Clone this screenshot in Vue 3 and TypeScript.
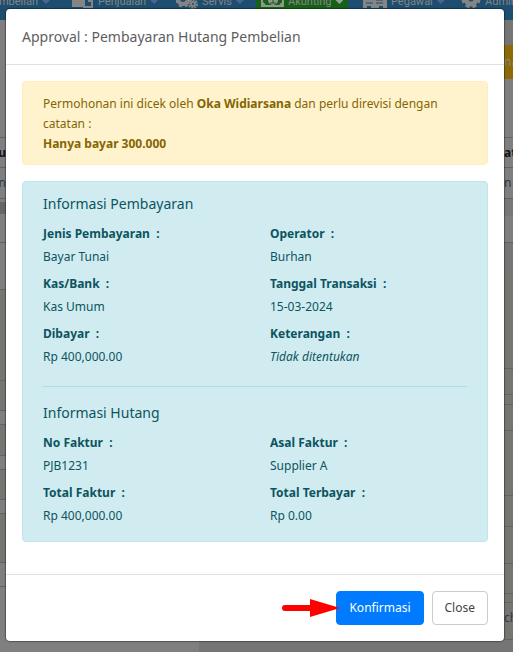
<script setup lang="ts">
interface Field {
  label: string
  value: string
  empty?: boolean
}
interface Section {
  title: string
  fields: Field[]
}
interface Strip {
  height: number
  tone: string
  text?: string
  bold?: boolean
}

const sections: Section[] = [
  {
    title: 'Informasi Pembayaran',
    fields: [
      { label: 'Jenis Pembayaran', value: 'Bayar Tunai' },
      { label: 'Operator', value: 'Burhan' },
      { label: 'Kas/Bank', value: 'Kas Umum' },
      { label: 'Tanggal Transaksi', value: '15-03-2024' },
      { label: 'Dibayar', value: 'Rp 400,000.00' },
      { label: 'Keterangan', value: 'Tidak ditentukan', empty: true },
    ],
  },
  {
    title: 'Informasi Hutang',
    fields: [
      { label: 'No Faktur', value: 'PJB1231' },
      { label: 'Asal Faktur', value: 'Supplier A' },
      { label: 'Total Faktur', value: 'Rp 400,000.00' },
      { label: 'Total Terbayar', value: 'Rp 0.00' },
    ],
  },
]

const leftStrips: Strip[] = [
  { height: 118, tone: 'light' },
  { height: 30, tone: 'light', text: 'u', bold: true },
  { height: 31, tone: 'light', text: 'n' },
  { height: 3, tone: 'plain' },
  { height: 12, tone: 'bar' },
  { height: 29, tone: 'light' },
  { height: 47, tone: 'light' },
  { height: 91, tone: 'dark' },
  { height: 30, tone: 'dark' },
  { height: 14, tone: 'light' },
  { height: 31, tone: 'dark' },
  { height: 14, tone: 'light' },
  { height: 30, tone: 'dark' },
  { height: 14, tone: 'light' },
  { height: 49, tone: 'dark' },
  { height: 24, tone: 'light' },
  { height: 64, tone: 'plain' },
]

const rightStrips: Strip[] = [
  { height: 25, tone: 'plain' },
  { height: 34, tone: 'gold', text: 'na' },
  { height: 59, tone: 'light' },
  { height: 30, tone: 'light', text: 'ate', bold: true },
  { height: 31, tone: 'light', text: 'n' },
  { height: 17, tone: 'grey' },
  { height: 27, tone: 'light' },
  { height: 33, tone: 'plain' },
  { height: 93, tone: 'dark' },
  { height: 26, tone: 'dark' },
  { height: 10, tone: 'dark' },
  { height: 26, tone: 'dark' },
  { height: 65, tone: 'dark' },
  { height: 31, tone: 'dark' },
  { height: 37, tone: 'dark' },
  { height: 30, tone: 'dark' },
  { height: 9, tone: 'dark' },
  { height: 37, tone: 'dark', text: 'ch' },
  { height: 30, tone: 'deep' },
]
</script>

<template>
  <div class="screen">
    <div class="page" aria-hidden="true">
      <nav class="nav">
        <span class="item first">Pembelian <i class="caret"></i></span>
        <span class="item sales">
          <svg width="22" height="20" viewBox="0 0 22 20"><path d="M0 0h11v7H0z" fill="#858585" /><path d="M12-2h8v9h-8z" fill="#1d4e6f" stroke="#858585" stroke-width="2" /><path d="M16 0h4v2h-4z" fill="#858585" /></svg>
          Penjualan <i class="caret"></i>
        </span>
        <span class="item service">
          <svg width="22" height="20" viewBox="0 0 22 20">
            <circle cx="7" cy="-1" r="5" fill="none" stroke="#858585" stroke-width="4" />
            <circle cx="7" cy="-1" r="7" fill="none" stroke="#858585" stroke-width="3" stroke-dasharray="3 3" />
            <circle cx="17" cy="4" r="2" fill="none" stroke="#858585" stroke-width="2" />
            <circle cx="17" cy="4" r="4" fill="none" stroke="#858585" stroke-width="2" stroke-dasharray="2 1" />
          </svg>
          Servis <i class="caret"></i>
        </span>
        <span class="item active">
          <svg width="23" height="20" viewBox="0 0 23 20"><path d="M0 0h23v7H0z" fill="#8f958f" /><path d="M2 0h19v2l-3 3H5L2 2z" fill="#176018" /><ellipse cx="12" cy="0" rx="5" ry="5" fill="#8f958f" /><path d="M9 3h6M12 0v3" stroke="#176018" stroke-width="1" /></svg>
          Akunting <i class="caret light-caret"></i>
        </span>
        <span class="item staff">
          <svg width="24" height="20" viewBox="0 0 24 20"><path d="M0 0h24v8h-4V6h-4v2H8V6H4v2H0z" fill="#858585" /><path d="M3 3h7M13 0h7M13 3h7" stroke="#1d4e6f" stroke-width="1" /></svg>
          Pegawai <i class="caret"></i>
        </span>
        <span class="item">
          <svg width="20" height="20" viewBox="0 0 20 20"><circle cx="10" cy="-1" r="5" fill="none" stroke="#858585" stroke-width="5" /><circle cx="10" cy="-1" r="8" fill="none" stroke="#858585" stroke-width="3" stroke-dasharray="4 3" /></svg>
          Admin
        </span>
      </nav>
      <div class="backdrop-body">
        <div class="edge left">
          <div v-for="(s, i) in leftStrips" :key="i" class="strip" :class="[s.tone, { bold: s.bold }]" :style="{ height: s.height + 'px' }">{{ s.text }}</div>
        </div>
        <div class="edge right">
          <div v-for="(s, i) in rightStrips" :key="i" class="strip" :class="[s.tone, { bold: s.bold }]" :style="{ height: s.height + 'px' }">{{ s.text }}</div>
        </div>
      </div>
    </div>

    <div class="overlay">
      <section class="modal" role="dialog" aria-modal="true" aria-labelledby="modal-title">
        <header class="modal-header">
          <h1 id="modal-title">Approval : Pembayaran Hutang Pembelian</h1>
        </header>
        <div class="modal-body">
          <div class="alert warning">
            Permohonan ini dicek oleh <b>Oka Widiarsana</b> dan perlu direvisi dengan catatan :<br />
            <b>Hanya bayar 300.000</b>
          </div>
          <div class="alert info">
            <section v-for="section in sections" :key="section.title" class="section">
              <h2>{{ section.title }}</h2>
              <dl class="fields">
                <div v-for="field in section.fields" :key="field.label">
                  <dt>{{ field.label }}&nbsp; :</dt>
                  <dd :class="{ empty: field.empty }">{{ field.value }}</dd>
                </div>
              </dl>
            </section>
          </div>
        </div>
        <footer class="modal-footer">
          <svg class="arrow" width="58" height="18" viewBox="0 0 58 18" aria-hidden="true"><path d="M3 9H32" stroke="#f00" stroke-width="6" stroke-linecap="round" /><path d="M28 0 58 9 28 18z" fill="#f00" /></svg>
          <button type="button" class="btn primary">Konfirmasi</button>
          <button type="button" class="btn">Close</button>
        </footer>
      </section>
    </div>
  </div>
</template>

<style>
body {
  background: #7f7f7f;
}
</style>

<style scoped>
* {
  box-sizing: border-box;
}
.screen {
  position: relative;
  min-height: 100vh;
  overflow: hidden;
  font: 12px/20px 'Noto Sans', 'Open Sans', sans-serif;
}
.page {
  position: absolute;
  inset: 0;
  overflow: hidden;
  background: linear-gradient(90deg, #7f7f7f 199px, #757575 199px);
}
.nav {
  display: flex;
  height: 20px;
  background: #1d4e6f;
  color: #858585;
  font-family: Roboto, sans-serif;
  font-size: 11px;
  line-height: 4px;
  white-space: nowrap;
}
.item {
  display: flex;
  flex: none;
  gap: 4px;
}
.item svg {
  flex: none;
}
.first {
  width: 72px;
  justify-content: flex-end;
  padding-right: 22px;
}
.sales {
  width: 104px;
}
.service {
  width: 80px;
}
.active {
  width: 92px;
  padding-left: 5px;
  background: #176018;
}
.staff {
  width: 113px;
  padding-left: 15px;
}
.caret {
  flex: none;
  width: 8px;
  height: 4px;
  background: #4d6490;
  clip-path: polygon(0 0, 100% 0, 50% 100%);
}
.light-caret {
  background: #9a9f9a;
}
.backdrop-body {
  display: flex;
  justify-content: space-between;
}
.edge {
  width: 9px;
}
.left {
  width: 6px;
}
.left .strip {
  display: flex;
  justify-content: flex-end;
}
.strip {
  overflow: hidden;
  border-bottom: 1px solid #636363;
  color: #303943;
  line-height: 30px;
}
.plain {
  border: 0;
}
.light {
  background: #7f7f7f;
}
.dark {
  background: #777572;
}
.deep {
  border: 0;
  background: #757575;
}
.grey {
  border: 0;
  background: #777;
}
.bar {
  border: 0;
  background: #666;
}
.gold {
  border: 0;
  background: #8b6a07;
  color: #858585;
  line-height: 34px;
}
.bold {
  color: #101318;
  font-weight: 700;
}
.overlay {
  position: relative;
  padding: 9px 9px 11px 6px;
}
.modal {
  border-radius: 4px;
  background: #fff;
  box-shadow: 0 0 1px 1px rgb(0 0 0 / 35%);
}
.modal-header {
  padding: 17px 16px;
  border-bottom: 1px solid #dee2e6;
}
h1,
h2 {
  margin: 0;
  font-size: 14px;
  font-weight: 400;
}
h1 {
  color: #5e5e5e;
  line-height: 21px;
}
h2 {
  margin-bottom: 11px;
  line-height: 18px;
}
.modal-body {
  padding: 16px;
}
.alert {
  margin-bottom: 16px;
  border: 1px solid;
  border-radius: 4px;
}
.warning {
  padding: 12px 20px 10px;
  border-color: #ffeeba;
  background: #fff3cd;
  color: #856404;
}
.info {
  padding: 13px 20px 8px;
  border-color: #bee5eb;
  background: #d1ecf1;
  color: #0c5460;
}
.section + .section {
  margin-top: 12px;
  padding-top: 17px;
  border-top: 1px solid #abdde5;
}
.fields {
  display: grid;
  grid-template-columns: 1fr 1fr;
  column-gap: 30px;
  margin: 0;
}
dt {
  margin-bottom: 3px;
  font-weight: 700;
}
dd {
  margin: 0 0 7px;
}
.empty {
  font-style: italic;
}
.modal-footer {
  display: flex;
  align-items: center;
  justify-content: flex-end;
  gap: 8px;
  padding: 16px;
  border-top: 1px solid #dee2e6;
}
.arrow {
  z-index: 1;
  margin-right: -12px;
}
.btn {
  height: 34px;
  padding: 0 12px;
  border: 1px solid #ccc;
  border-radius: 4px;
  background: #fff;
  color: #444;
  font: inherit;
}
.primary {
  border-color: #007bff;
  background: #007bff;
  color: #fff;
}
</style>
